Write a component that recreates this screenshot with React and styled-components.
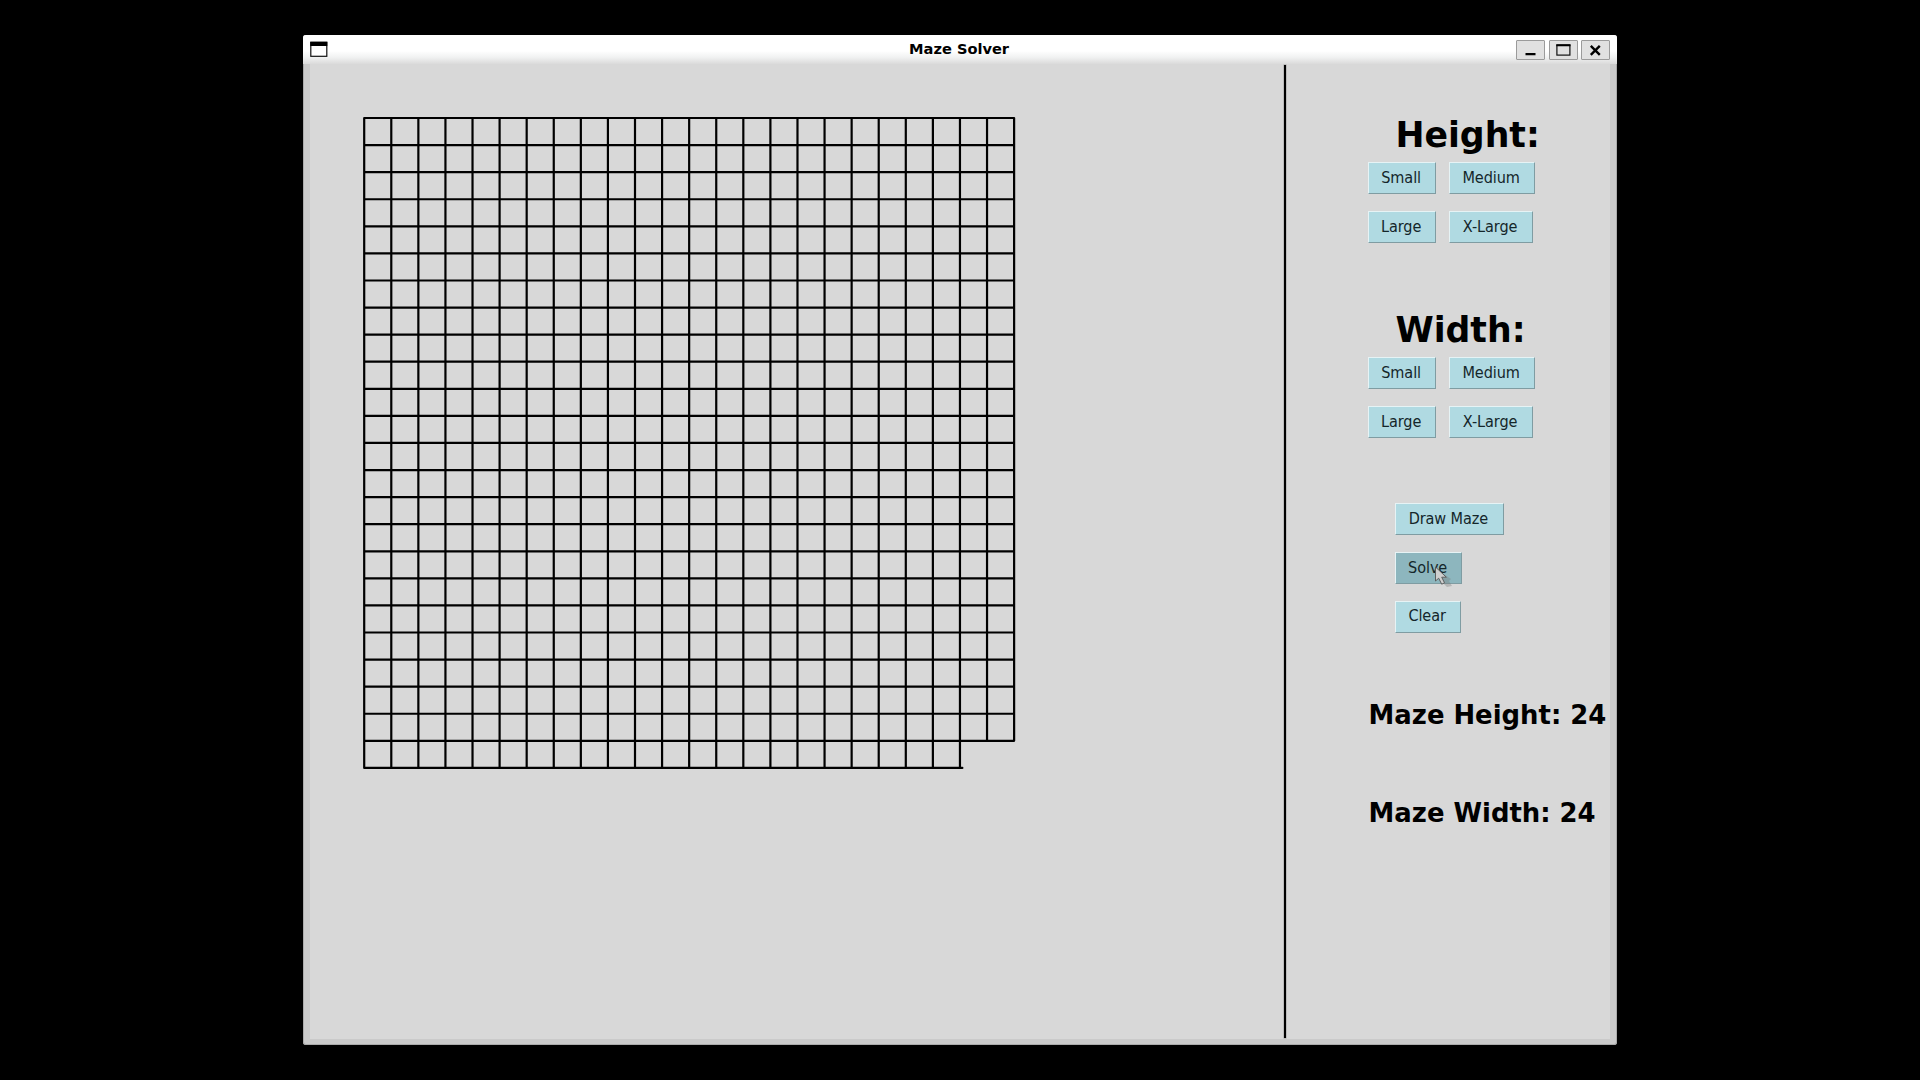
import React from "react";
import styled, { createGlobalStyle } from "styled-components";

const GlobalStyle = createGlobalStyle`
  html, body { margin: 0; background: #000; overflow: hidden; }
`;

const Desktop = styled.div`
  box-sizing: border-box;
  width: 1920px;
  height: 1080px;
  padding: 34.5px 0 0 303.4px;
  background: #000;
  font-family: "DejaVu Sans", sans-serif;
  color: #000;
`;

const Window = styled.div`
  box-sizing: border-box;
  display: flex;
  flex-direction: column;
  width: 1313.4px;
  height: 1010.5px;
  border-radius: 3px;
  overflow: hidden;
  background: #cacaca;
  box-shadow: inset 0 0 0 1px #aaa;
`;

const TitleBar = styled.header`
  box-sizing: border-box;
  display: grid;
  grid-template-columns: 94px 1fr 94px;
  align-items: center;
  height: 29.5px;
  flex: none;
  padding: 0 6.5px;
  background: linear-gradient(#fff 0, #fff 55%, #f0f1f1 78%, #dadada 100%);
`;

const Title = styled.h1`
  margin: 0;
  padding: 0 2px 0 0;
  text-align: center;
  font-size: 14.6px;
  line-height: 18px;
  font-weight: bold;
`;

const WindowIcon = styled.svg`
  display: block;
  width: 18px;
  height: 16px;
`;

const Controls = styled.div`
  display: flex;
  justify-content: flex-end;
  gap: 3.5px;
  padding-top: 1px;
`;

const ControlButton = styled.button`
  box-sizing: border-box;
  width: 29px;
  height: 20px;
  padding: 0;
  border: 1px solid #9b9b9b;
  border-radius: 1px;
  background: #e1e1e1;
  svg { display: block; width: 27px; height: 18px; }
`;

const Client = styled.main`
  display: flex;
  flex: 1;
  margin: 0 6.5px 6.5px;
  background: #d8d8d8;
`;

const MazeArea = styled.section`
  box-sizing: border-box;
  width: 974px;
  padding: 51px 0 0 51px;
`;

const MazeCanvas = styled.svg`
  display: block;
  width: 660px;
  height: 660px;
`;

const Divider = styled.div`
  width: 2px;
  height: 973px;
  margin-top: 1px;
  background: #000;
  box-shadow: 0 0 0 0.5px #0004;
`;

const Sidebar = styled.aside`
  box-sizing: border-box;
  flex: 1;
  min-width: 0;
  padding: 45px 0 0 81.7px;
`;

const SizeGroup = styled.section`
  height: 195px;
`;

const Heading = styled.h2`
  box-sizing: border-box;
  margin: 0 0 0 27.8px;
  height: 53px;
  padding-top: 1px;
  font-size: 34.7px;
  line-height: 51px;
  font-weight: bold;
`;

const ButtonGrid = styled.div`
  display: grid;
  grid-template-columns: 81.5px max-content;
  grid-auto-rows: 48.8px;
  justify-items: start;
`;

const Actions = styled.div`
  box-sizing: border-box;
  display: grid;
  grid-auto-rows: 48.8px;
  justify-items: start;
  padding: 4px 0 0 27px;
  height: 199px;
`;

const ToolButton = styled.button`
  position: relative;
  box-sizing: border-box;
  width: ${(p) => p.$width}px;
  height: 32.4px;
  padding: 0 1.4px 0.6px 0;
  border: 1.5px solid;
  border-color: #e6f3f5 #7f9ca2 #7f9ca2 #e6f3f5;
  background: ${(p) => (p.$active ? "#8db6be" : "#b0dae2")};
  color: #14262a;
  font: 14.5px/20px "DejaVu Sans", sans-serif;
  letter-spacing: -0.1px;
  white-space: nowrap;
`;

const Label = styled.span`
  display: inline-block;
  transform: scaleY(1.07);
`;

const Pointer = styled.svg`
  position: absolute;
  left: 38px;
  top: 13px;
  width: 20px;
  height: 24px;
`;

const Status = styled.p`
  margin: 0;
  padding-left: 1px;
  height: 97.5px;
  font-size: 25.9px;
  line-height: 34px;
  font-weight: bold;
  white-space: nowrap;
`;

const SIZES = [
  ["Small", 68.5],
  ["Medium", 85.5],
  ["Large", 68.5],
  ["X-Large", 83.5],
];

const CELL = 27.08;
const COUNT = 24;
const ORIGIN_X = 3.2;
const ORIGIN_Y = 3;
const SPAN = CELL * COUNT;

function Maze() {
  const lines = [];
  for (let i = 0; i <= COUNT; i += 1) {
    const x = ORIGIN_X + i * CELL;
    const y = ORIGIN_Y + i * CELL;
    const bottom = ORIGIN_Y + SPAN - (i > 22 ? CELL : 0);
    const right = i === COUNT ? ORIGIN_X + 22 * CELL + 2.4 : ORIGIN_X + SPAN;
    lines.push(`M${x} ${ORIGIN_Y}V${bottom}`, `M${ORIGIN_X} ${y}H${right}`);
  }
  return (
    <MazeCanvas viewBox="0 0 660 660">
      <path d={lines.join("")} stroke="#000" strokeWidth="2.2" strokeLinecap="round" fill="none" />
    </MazeCanvas>
  );
}

function SizePicker({ label }) {
  return (
    <SizeGroup>
      <Heading>{label}</Heading>
      <ButtonGrid>
        {SIZES.map(([name, width]) => (
          <ToolButton key={name} $width={width}>
            <Label>{name}</Label>
          </ToolButton>
        ))}
      </ButtonGrid>
    </SizeGroup>
  );
}

export default function App() {
  return (
    <Desktop>
      <GlobalStyle />
      <Window>
        <TitleBar>
          <WindowIcon viewBox="0 0 18 16">
            <rect x="0.8" y="1.3" width="16" height="14" fill="#fff" stroke="#111" strokeWidth="1.2" />
            <rect x="0.3" y="0.8" width="17" height="4.2" fill="#000" />
          </WindowIcon>
          <Title>Maze Solver</Title>
          <Controls>
            <ControlButton>
              <svg viewBox="0 0 27 18"><path d="M8.5 13.2h10" stroke="#000" strokeWidth="2.2" /></svg>
            </ControlButton>
            <ControlButton>
              <svg viewBox="0 0 27 18">
                <rect x="6.9" y="4.1" width="13" height="10" fill="none" stroke="#111" strokeWidth="1.2" />
                <path d="M6.3 4.3h14.2" stroke="#000" strokeWidth="2" />
              </svg>
            </ControlButton>
            <ControlButton>
              <svg viewBox="0 0 27 18"><path d="M8.8 4.8l9 9M17.8 4.8l-9 9" stroke="#000" strokeWidth="2.4" /></svg>
            </ControlButton>
          </Controls>
        </TitleBar>
        <Client>
          <MazeArea><Maze /></MazeArea>
          <Divider />
          <Sidebar>
            <SizePicker label="Height:" />
            <SizePicker label="Width:" />
            <Actions>
              <ToolButton $width={109}><Label>Draw Maze</Label></ToolButton>
              <ToolButton $width={67.5} $active>
                <Label>Solve</Label>
                <Pointer viewBox="0 0 20 24">
                  <path d="M8 7l9 6-2 2 3 5-5 1-5-5z" fill="#777" opacity="0.35" />
                  <path d="M1.5 1v14l3.2-2.8 3 6 2.8-1.4-2.8-5.6h4.6z" fill="#cfcfcf" stroke="#555" strokeWidth="0.9" />
                </Pointer>
              </ToolButton>
              <ToolButton $width={66.5}><Label>Clear</Label></ToolButton>
            </Actions>
            <Status>Maze Height: 24</Status>
            <Status>Maze Width: 24</Status>
          </Sidebar>
        </Client>
      </Window>
    </Desktop>
  );
}
